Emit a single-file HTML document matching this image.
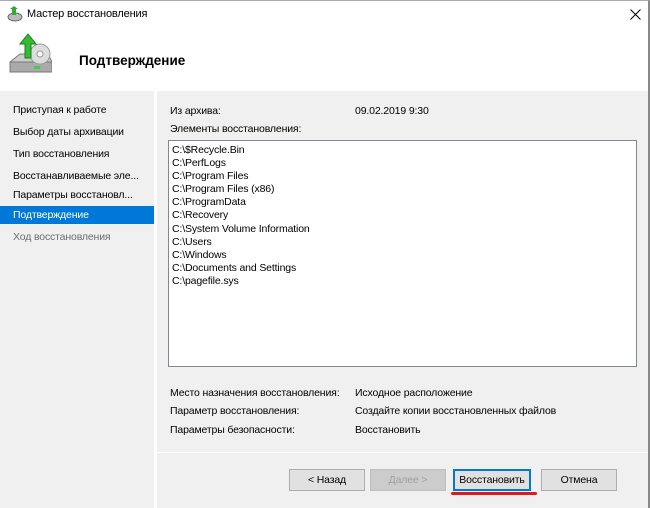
<!DOCTYPE html>
<html><head><meta charset="utf-8"><style>
*{margin:0;padding:0;box-sizing:border-box}
body{width:650px;height:508px;background:#fff;font-family:"Liberation Sans",sans-serif;font-size:10.5px;letter-spacing:-0.15px;color:#000;position:relative;overflow:hidden}
.a{position:absolute}
.nav div{position:absolute;left:0;width:154px;height:18px;padding-left:13px;line-height:18px}
.btn{position:absolute;top:469px;height:22px;background:#e1e1e1;border:1px solid #adadad;text-align:center;line-height:20px}
</style></head><body>
<div class="a" style="left:0;top:0;width:650px;height:508px;border-right:2px solid #888;border-top:1px solid #aaa"></div>
<svg class="a" style="left:7px;top:6px" width="16" height="16"><ellipse cx="8" cy="11" rx="7" ry="4" fill="#bbb" stroke="#666"/><path d="M5 9V3h-2l4-3 4 3h-2v6z" fill="#3a3"/></svg>
<div class="a" style="left:27px;top:8px;font-size:11px">Мастер восстановления</div>
<svg class="a" style="left:630px;top:9px" width="11" height="11"><path d="M0.5 0.5L10.5 10.5M10.5 0.5L0.5 10.5" stroke="#000" stroke-width="1"/></svg>
<svg class="a" style="left:8px;top:32px" width="44" height="46">
<path d="M2 30 L12 22 H40 L44 30 V40 H2 Z" fill="#ccc" stroke="#777"/><rect x="2" y="30" width="42" height="10" fill="#aaa" stroke="#777"/><rect x="26" y="34" width="6" height="3" fill="#4c4"/>
<circle cx="32" cy="22" r="10" fill="#ddd" stroke="#999"/><circle cx="32" cy="22" r="3" fill="#fff" stroke="#999"/>
<path d="M17 26 V12 H12 L20 2 L28 12 H23 V26 Z" fill="#3b3" stroke="#1a7a1a"/></svg>
<div class="a" style="left:79px;top:53px;font-size:13.5px;font-weight:bold;letter-spacing:0">Подтверждение</div>
<div class="a" style="left:0;top:91px;width:648px;height:417px;background:#f0f0f0"></div>
<div class="a" style="left:154px;top:91px;width:3px;height:417px;background:#fff"></div>
<div class="nav">
<div style="top:101px">Приступая к работе</div>
<div style="top:123px">Выбор даты архивации</div>
<div style="top:145px">Тип восстановления</div>
<div style="top:167px">Восстанавливаемые эле...</div>
<div style="top:186px">Параметры восстановл...</div>
<div style="top:206px;background:#0078d7;color:#fff">Подтверждение</div>
<div style="top:228px;color:#6d6d6d">Ход восстановления</div>
</div>
<div class="a" style="left:170px;top:105px">Из архива:</div>
<div class="a" style="left:355px;top:105px">09.02.2019 9:30</div>
<div class="a" style="left:170px;top:123px">Элементы восстановления:</div>
<div class="a" style="left:168px;top:140px;width:469px;height:227px;background:#fff;border:1px solid #828790;padding:3px 3px;line-height:13.1px">C:\$Recycle.Bin<br>C:\PerfLogs<br>C:\Program Files<br>C:\Program Files (x86)<br>C:\ProgramData<br>C:\Recovery<br>C:\System Volume Information<br>C:\Users<br>C:\Windows<br>C:\Documents and Settings<br>C:\pagefile.sys</div>
<div class="a" style="left:170px;top:387px">Место назначения восстановления:</div>
<div class="a" style="left:355px;top:387px">Исходное расположение</div>
<div class="a" style="left:170px;top:405px">Параметр восстановления:</div>
<div class="a" style="left:355px;top:405px">Создайте копии восстановленных файлов</div>
<div class="a" style="left:170px;top:424px">Параметры безопасности:</div>
<div class="a" style="left:355px;top:424px">Восстановить</div>
<div class="a" style="left:157px;top:452px;width:491px;height:1px;background:#fff"></div>
<div class="btn" style="left:289px;width:76px">&lt; Назад</div>
<div class="btn" style="left:370px;width:76px;color:#a0a0a0;background:#ccc;border-color:#bfbfbf">Далее &gt;</div>
<div class="btn" style="left:453px;width:78px;border:2px solid #0078d7;line-height:18px">Восстановить</div>
<div class="btn" style="left:541px;width:76px">Отмена</div>
<div class="a" style="left:451px;top:492px;width:86px;height:3px;background:#e01a1a;border-radius:2px"></div>
</body></html>
